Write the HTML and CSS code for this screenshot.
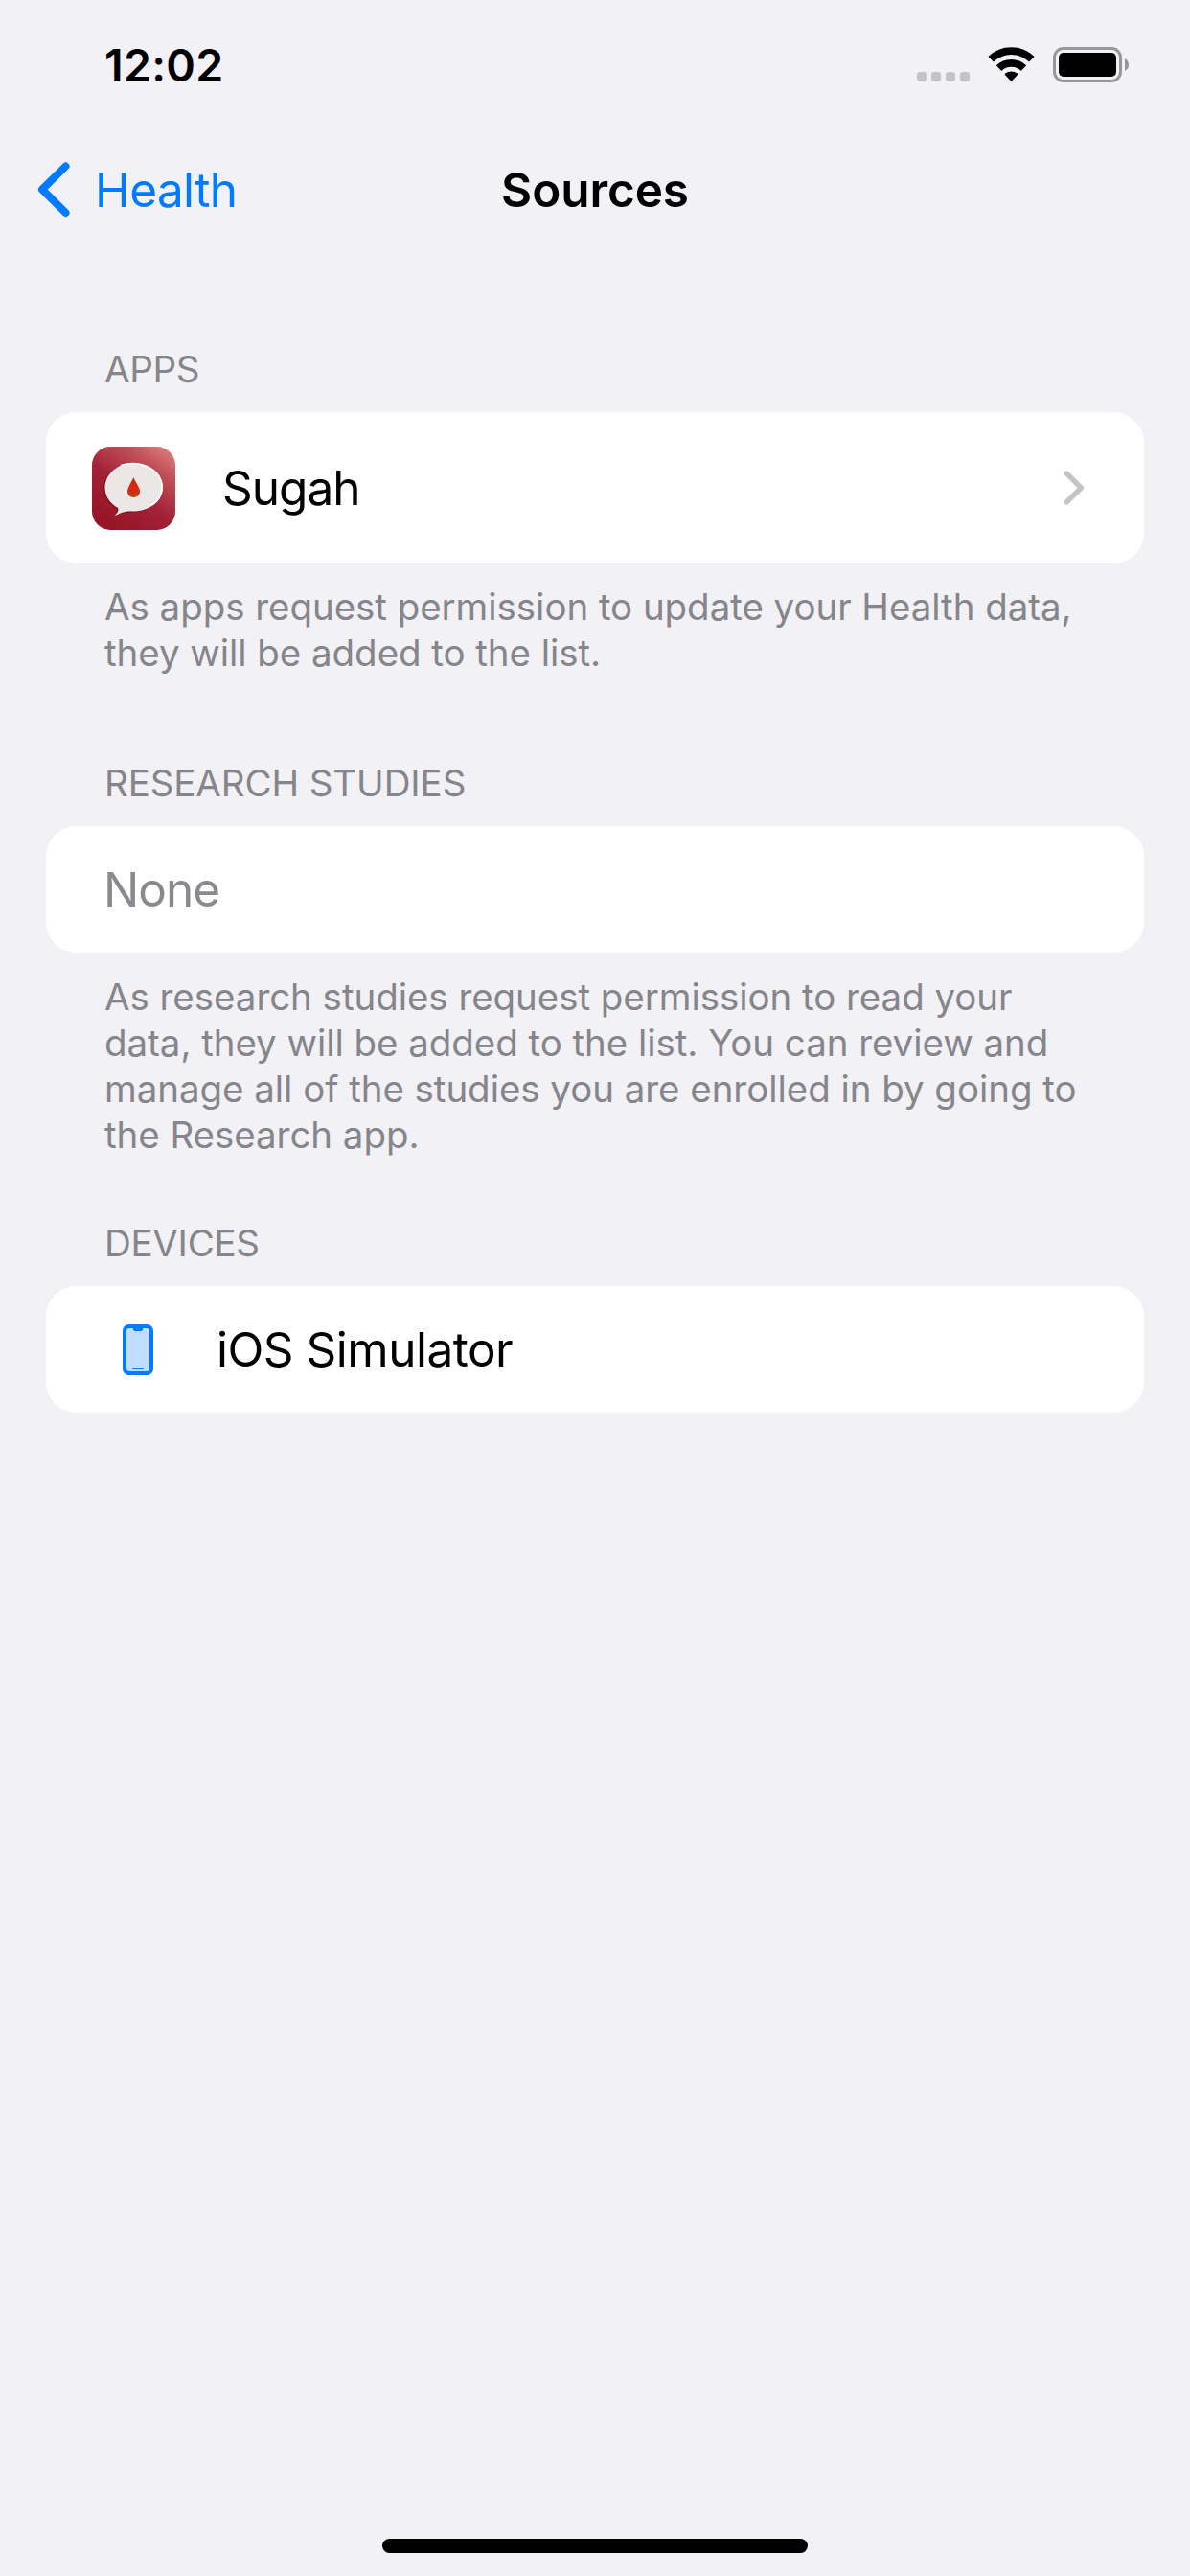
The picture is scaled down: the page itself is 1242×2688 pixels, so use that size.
FILE: index.html
```html
<!DOCTYPE html>
<html lang="en">
<head>
<meta charset="utf-8">
<title>Sources</title>
<link rel="stylesheet" href="styles.css">
</head>
<body>
<div class="screen">
  <header class="status-bar">
    <span class="time">12:02</span>
    <svg class="status-icons" width="230" height="40" viewBox="0 0 230 40" aria-hidden="true">
      <g fill="#c4c3c9">
        <rect x="0" y="26" width="10" height="10" rx="3"/>
        <rect x="15" y="26" width="10" height="10" rx="3"/>
        <rect x="30" y="26" width="10" height="10" rx="3"/>
        <rect x="45" y="26" width="10" height="10" rx="3"/>
      </g>
      <g fill="none" stroke="#000" stroke-width="7.8">
        <path d="M77.2 12.700A30.500 30.500 0 0 1 119.800 12.700"/>
        <path d="M85.600 22.100A18.500 18.500 0 0 1 111.400 22.100"/>
      </g>
      <path d="M98.500 36L91.900 29Q91.500 28.200 92.200 27.500A10.500 10.500 0 0 1 104.800 27.500Q105.500 28.200 105.100 29Z"/>
      <rect x="143.500" y="1.500" width="69" height="34" rx="9.500" fill="none" stroke="#97969a" stroke-width="3"/>
      <rect x="148" y="6" width="60" height="25" rx="5"/>
      <path d="M217 12Q221 14 221 18.500T217 25Z" fill="#97969a"/>
    </svg>
  </header>
  <nav class="nav-bar">
    <a class="back">
      <svg width="34" height="58" viewBox="0 0 34 58" fill="none" stroke="#007aff" stroke-width="8" stroke-linecap="round" stroke-linejoin="round" aria-hidden="true"><path d="M29.500 4.500L5 28.700L29.500 53"/></svg>
      <span>Health</span>
    </a>
    <h1>Sources</h1>
  </nav>
  <main>
    <section class="group apps">
      <h2>APPS</h2>
      <div class="card app-row">
        <svg class="app-icon" width="87" height="87" viewBox="0 0 87 87" aria-hidden="true">
          <defs>
            <linearGradient id="bg" x1="0.25" y1="0.95" x2="0.92" y2="0">
              <stop offset="0" stop-color="#981427"/><stop offset=".4" stop-color="#a32236"/><stop offset=".75" stop-color="#c25059"/><stop offset="1" stop-color="#de817e"/>
            </linearGradient>
            <linearGradient id="drop" x1="0" y1="0" x2="0" y2="1">
              <stop offset="0" stop-color="#a8320c"/><stop offset=".4" stop-color="#dc2413"/><stop offset=".65" stop-color="#d42910"/><stop offset="1" stop-color="#b34a0c"/>
            </linearGradient>
          </defs>
          <rect width="87" height="87" rx="19.500" fill="url(#bg)"/>
          <path d="M43 18C26 18 12.300 29 12.300 43.500C12.300 53 18 60 26.300 65C27 68 25 70 23 73C28 71 31 68.700 39 68.500C59 69 73.500 58 73.500 43C73.500 28.500 60 18 43 18Z" fill="#690716" opacity=".75"/>
          <path d="M43.500 17C27 17 13.500 28.500 13.500 43C13.500 52 19 59.500 27 64C28.500 67 26 69.500 23.500 72.500C29 70 32 67.500 40 67.500C60 68.500 74 57 74 42.500C74 28 60 17 43.500 17Z" fill="#ebe7e7"/>
          <path d="M30 19.500C51 13 73 25 73 42.500C73 50 69 57 62 61" fill="none" stroke="#fff" stroke-width="1.600"/>
          <path d="M43.300 32C42 36.500 37 42 37 46.800C37 50.500 39.800 53 43.400 53S50 50.500 50 46.800C50 42 44.600 36.500 43.300 32Z" fill="url(#drop)"/>
        </svg>
        <span>Sugah</span>
        <svg class="chevron" width="22" height="36" viewBox="0 0 22 36" fill="none" stroke="#c4c4c6" stroke-width="5.400" stroke-linecap="round" stroke-linejoin="round" aria-hidden="true"><path d="M3.200 3L18.400 18L3.200 33"/></svg>
      </div>
      <p class="foot">As apps request permission to update your Health data,<br>they will be added to the list.</p>
    </section>
    <section class="group research">
      <h2>RESEARCH STUDIES</h2>
      <div class="card none-row"><span>None</span></div>
      <p class="foot">As research studies request permission to read your<br>data, they will be added to the list. You can review and<br>manage all of the studies you are enrolled in by going to<br>the Research app.</p>
    </section>
    <section class="group devices">
      <h2>DEVICES</h2>
      <div class="card device-row">
        <svg width="32" height="53" viewBox="0 0 32 53" aria-hidden="true">
          <rect width="32" height="53" rx="6.500" fill="#007aff"/>
          <path d="M7 4H10.500Q11 7 13.500 7H18.500Q21 7 21.500 4H25Q28 4 28 7V46Q28 49 25 49H7Q4 49 4 46V7Q4 4 7 4Z" fill="#bfdeff"/>
          <rect x="10" y="45" width="12" height="2" rx="1" fill="#007aff"/>
        </svg>
        <span>iOS Simulator</span>
      </div>
    </section>
  </main>
  <div class="home-indicator"></div>
</div>
</body>
</html>
```
FILE: styles.css
```css
* { box-sizing: border-box; margin: 0; padding: 0; }
body { background: #f2f1f6; color: #000; font-family: Inter, "Liberation Sans", sans-serif; }
svg { display: block; flex: none; }
.screen { display: flex; flex-direction: column; width: 1242px; height: 2688px; }

.status-bar { display: flex; justify-content: space-between; align-items: flex-start; height: 132px; padding: 44px 55px 0 109px; }
.time { font-size: 46.5px; line-height: 48px; font-weight: 600; letter-spacing: 0.3px; }
.status-icons { margin-top: 5px; }

.nav-bar { display: grid; grid-template-columns: 1fr auto 1fr; align-items: center; height: 132px; padding: 0 39px; }
.back { display: flex; align-items: center; gap: 26px; color: #007aff; font-size: 49.5px; line-height: 60px; letter-spacing: -0.6px; }
h1 { font-size: 49.5px; line-height: 60px; font-weight: 600; letter-spacing: -0.1px; }

main { flex: 1; padding: 97px 48px 0; }
.apps { margin-bottom: 88px; }
.research { margin-bottom: 65px; }
h2 { padding: 0 61px 21px; font-size: 38.5px; line-height: 48px; font-weight: 400; letter-spacing: -0.1px; color: #85858b; }
.apps h2, .devices h2 { letter-spacing: -0.3px; }

.card { display: flex; align-items: center; border-radius: 32px; background: #fff; font-size: 49.5px; line-height: 60px; }
.app-row { height: 158px; padding: 0 62px 0 48px; letter-spacing: -1px; }
.app-row span { margin-left: 49px; }
.app-row .chevron { margin-left: auto; }
.none-row { height: 132px; padding: 0 60px; letter-spacing: -1px; color: #8a8a8e; }
.device-row { height: 132px; padding: 0 80px; gap: 66px; letter-spacing: -0.5px; }

.foot { padding: 21px 61px 0; font-size: 38.5px; line-height: 48px; letter-spacing: -0.05px; color: #85858b; white-space: nowrap; }
.research .foot { padding-top: 22px; }

.home-indicator { width: 444px; height: 15px; margin: 0 auto 24px; border-radius: 8px; background: #000; }
```
